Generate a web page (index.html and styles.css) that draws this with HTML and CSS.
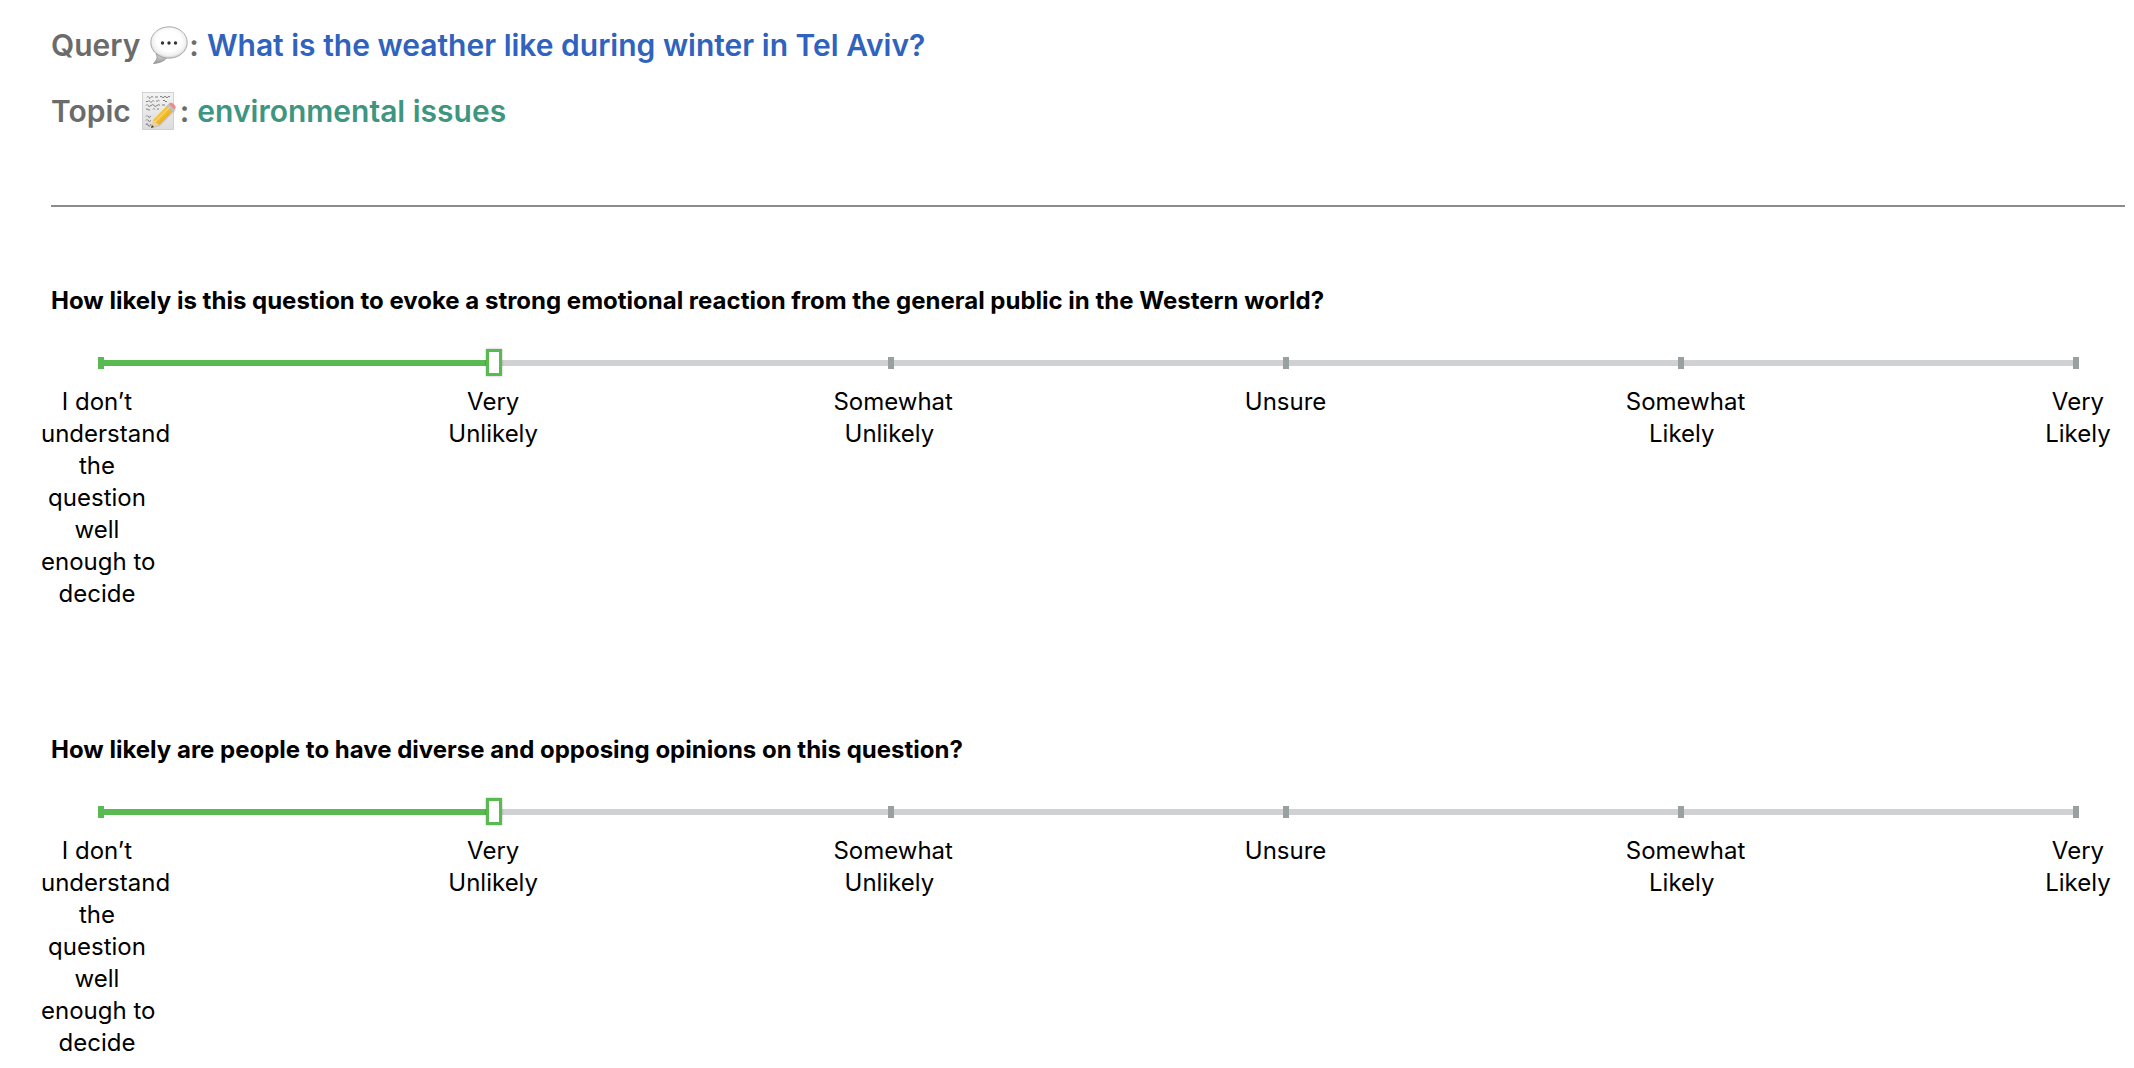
FILE: index.html
```html
<!DOCTYPE html>
<html lang="en">
<head>
<meta charset="utf-8">
<meta name="viewport" content="width=device-width, initial-scale=1">
<title>Question survey</title>
<link rel="stylesheet" href="styles.css">
</head>
<body>
<main class="page">
  <header class="intro">
    <h1 class="fact">
      <span>Query</span>
      <svg class="emoji" viewBox="0 0 38 38" aria-hidden="true">
        <defs>
          <radialGradient id="bubble" cx="50%" cy="45%" r="55%">
            <stop offset="0.6" stop-color="#fff"/>
            <stop offset="0.85" stop-color="#f0f0f0"/>
            <stop offset="1" stop-color="#c8c8c8"/>
          </radialGradient>
          <linearGradient id="tail" x1="0" y1="0" x2="0" y2="1">
            <stop offset="0" stop-color="#d8d8d8"/>
            <stop offset="1" stop-color="#9a9a9a"/>
          </linearGradient>
        </defs>
        <path d="M6 28C8 31 7 34 3.500 37.500C10 37 14.500 35 17.500 31Z" fill="url(#tail)" stroke="#8c8c8c" stroke-width="0.8"/>
        <ellipse cx="19" cy="16.500" rx="18.200" ry="15.700" fill="url(#bubble)" stroke="#a2a2a2" stroke-width="0.9"/>
        <circle cx="12.500" cy="17" r="1.700" fill="#333"/>
        <circle cx="19" cy="17" r="1.700" fill="#333"/>
        <circle cx="25.500" cy="17" r="1.700" fill="#333"/>
      </svg>
      <span class="colon">:</span>
      <span class="query">What is the weather like during winter in Tel Aviv?</span>
    </h1>
    <h2 class="fact">
      <span>Topic</span>
      <svg class="emoji" viewBox="0 0 38 38" aria-hidden="true">
        <defs>
          <linearGradient id="sheet" x1="0" y1="0" x2="0" y2="1">
            <stop offset="0" stop-color="#f4f4f4"/>
            <stop offset="1" stop-color="#dcdcdc"/>
          </linearGradient>
          <linearGradient id="wood" x1="0" y1="0" x2="1" y2="1">
            <stop offset="0" stop-color="#ffdc62"/>
            <stop offset="0.5" stop-color="#f8bd2d"/>
            <stop offset="1" stop-color="#c98210"/>
          </linearGradient>
        </defs>
        <rect x="1.500" y="0.500" width="31" height="37" fill="url(#sheet)" stroke="#c9c9c9" stroke-width="0.8"/>
        <path d="M6 5.500q1-2 2 0t2-.2t2 .2M14 5h3M19 5q1-1.500 2 0t2 0t2 0t2 0t2 0M5 9.500h2q1-2 2 0t2 0t2 0M15 9h1.500q1-1.500 2 0M22 9q1-2 2 0t2 0M5 13.500q1-2 2 0t3 0t3 0t3 0t3 0M21 13h3M5 17.500q1-1.500 2 0t2 0M12 17.500q1-2 2 0M16 17h2M5 24.500q1-2 2 0t3-.5M5 28.500q1-2 2 0t3 0M5 33q1-3 2 0t3-1" fill="none" stroke="#707070" stroke-width="0.9"/>
        <path d="M13 30L29 13L35 18L19 34L12 36Z" fill="#777" opacity=".25"/>
        <path d="M12 28L27 12.500L33 18L18 33Z" fill="url(#wood)"/>
        <path d="M12 28L18 33L10 36Z" fill="#efcf98"/>
        <path d="M10.900 33L13 35L10 36Z" fill="#333"/>
        <path d="M25.300 14.300L27.600 12L33.400 17.500L31.200 19.800Z" fill="#b9c2c8"/>
        <path d="M27.600 12C29 10 31 10.500 33 12.300C35.300 14.300 35.300 15.800 33.400 17.500Z" fill="#ed8b87"/>
        <path d="M14 30L29 14.800" stroke="#ffe994" stroke-width="1" opacity=".8"/>
      </svg>
      <span class="colon">:</span>
      <span class="topic">environmental issues</span>
    </h2>
  </header>

  <hr class="rule">

  <form class="questions">
    <section class="question">
      <label class="prompt" for="emotion">How likely is this question to evoke a strong emotional reaction from the general public in the Western world?</label>
      <div class="scale">
        <div class="track"><div class="fill"></div></div>
        <div class="ticks"><i class="tick on"></i><i class="tick"></i><i class="tick"></i><i class="tick"></i><i class="tick"></i><i class="tick"></i></div>
        <input class="slider" id="emotion" type="range" min="0" max="5" step="1" value="1">
      </div>
      <div class="labels">
        <span class="label">I don’t understand the question well enough&nbsp;to decide</span>
        <span class="label">Very Unlikely</span>
        <span class="label">Somewhat Unlikely</span>
        <span class="label">Unsure</span>
        <span class="label">Somewhat Likely</span>
        <span class="label">Very Likely</span>
      </div>
    </section>

    <section class="question">
      <label class="prompt" for="diversity">How likely are people to have diverse and opposing opinions on this question?</label>
      <div class="scale">
        <div class="track"><div class="fill"></div></div>
        <div class="ticks"><i class="tick on"></i><i class="tick"></i><i class="tick"></i><i class="tick"></i><i class="tick"></i><i class="tick"></i></div>
        <input class="slider" id="diversity" type="range" min="0" max="5" step="1" value="1">
      </div>
      <div class="labels">
        <span class="label">I don’t understand the question well enough&nbsp;to decide</span>
        <span class="label">Very Unlikely</span>
        <span class="label">Somewhat Unlikely</span>
        <span class="label">Unsure</span>
        <span class="label">Somewhat Likely</span>
        <span class="label">Very Likely</span>
      </div>
    </section>
  </form>
</main>
</body>
</html>
```
FILE: styles.css
```css
* {
  box-sizing: border-box;
}

body {
  margin: 0;
  background: #fff;
  color: #000;
  font-family: Inter, "Liberation Sans", sans-serif;
  font-size: 24px;
  line-height: 32px;
}

.page {
  padding: 25px 9px 0 51px;
}

.intro {
  display: flex;
  flex-direction: column;
  gap: 26px;
}

.fact {
  display: flex;
  align-items: center;
  margin: 0;
  color: #6b6b6b;
  font-size: 30px;
  font-weight: 600;
  line-height: 40px;
}

.emoji {
  width: 38px;
  height: 38px;
  margin-left: 10px;
}

.colon {
  margin: 0 8px 0 1px;
}

.query {
  color: #2f63bd;
}

.topic {
  color: #3e9680;
}

.rule {
  height: 2px;
  margin: 74px 0 78px;
  border: 0;
  background: #8b8d8d;
}

.questions {
  display: flex;
  flex-direction: column;
  gap: 124px;
}

.prompt {
  display: block;
  font-weight: 700;
}

/* Track, tick marks and slider share one grid cell. */
.scale {
  display: grid;
  align-items: center;
  margin: 32px 46px 10px 47px;
}

.scale > * {
  grid-area: 1 / 1;
}

.track {
  height: 6px;
  background: #cfd1d2;
}

.fill {
  width: 20%;
  height: 6px;
  background: #58ba50;
}

.ticks {
  display: flex;
  justify-content: space-between;
}

.tick {
  width: 6px;
  height: 12px;
  background: #99a0a0;
}

.tick.on {
  background: #58ba50;
}

.slider {
  appearance: none;
  height: 27px;
  margin: 0 -3px 0 -7px;
  background: transparent;
}

.slider::-webkit-slider-thumb {
  appearance: none;
  width: 16px;
  height: 27px;
  border: 3px solid #58ba50;
  background: #fff;
  box-shadow: 0 0 2px rgb(0 0 0 / 30%);
}

.slider::-moz-range-thumb {
  width: 16px;
  height: 27px;
  border: 3px solid #58ba50;
  border-radius: 0;
  background: #fff;
}

.labels {
  display: flex;
  justify-content: space-between;
  margin: 0 -9px 0 -10px;
}

.label {
  width: 112px;
  text-align: center;
}
```
